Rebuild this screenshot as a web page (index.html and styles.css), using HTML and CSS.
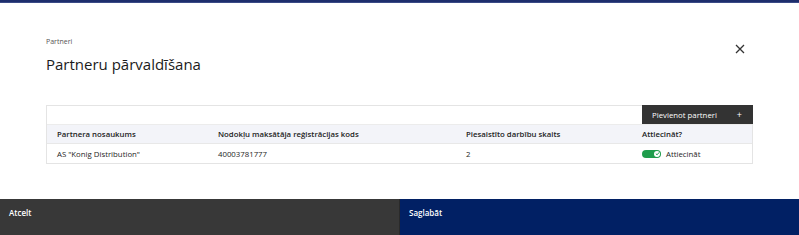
FILE: index.html
```html
<!DOCTYPE html>
<html lang="lv">
<head>
<meta charset="utf-8">
<link rel="stylesheet" href="styles.css">
</head>
<body>
<div class="topbar"></div>
<div class="dialog">
  <div class="head">
    <div class="titles">
      <div class="crumb">Partneri</div>
      <h1 class="title">Partneru pārvaldīšana</h1>
    </div>
    <button class="close" aria-label="Aizvērt">
      <svg width="10" height="10" viewBox="0 0 10 10"><path d="M1 1L9 9M9 1L1 9" stroke="#333" stroke-width="1.3"/></svg>
    </button>
  </div>
  <div class="table">
    <div class="toolbar">
      <button class="add"><span>Pievienot partneri</span><span class="plus">+</span></button>
    </div>
    <div class="row header">
      <div class="c1">Partnera nosaukums</div>
      <div class="c2">Nodokļu maksātāja reģistrācijas kods</div>
      <div class="c3">Piesaistīto darbību skaits</div>
      <div class="c4">Attiecināt?</div>
    </div>
    <div class="row">
      <div class="c1">AS "Konig Distribution"</div>
      <div class="c2">40003781777</div>
      <div class="c3">2</div>
      <div class="c4"><span class="toggle"><span class="knob"><svg width="5" height="5" viewBox="0 0 6 6"><path d="M1 3.2L2.5 4.6L5 1.6" fill="none" stroke="#1f9d4c" stroke-width="1.2"/></svg></span></span>Attiecināt</div>
    </div>
  </div>
</div>
<div class="footer">
  <button class="cancel">Atcelt</button>
  <button class="save">Saglabāt</button>
</div>
</body>
</html>
```
FILE: styles.css
```css
* { box-sizing: border-box; }
html, body { margin: 0; padding: 0; }
body {
  width: 799px;
  height: 235px;
  overflow: hidden;
  background: #fff;
  font-family: "Open Sans", "Noto Sans", sans-serif;
  color: #252525;
  position: relative;
}
.topbar {
  height: 3px;
  background: #1d2e6c;
  border-bottom: 1px solid #3a4a86;
}
.dialog {
  padding: 34px 46px 0 46px;
}
.head {
  display: flex;
  justify-content: space-between;
  align-items: flex-start;
}
.crumb {
  font-size: 7px;
  color: #555;
  line-height: 10px;
}
.title {
  margin: 5px 0 0 0;
  font-weight: 400;
  font-size: 15px;
  line-height: 24px;
  color: #1b1b1b;
}
.close {
  border: 0;
  background: none;
  padding: 0;
  margin: 7px 8px 0 0;
  width: 10px;
  height: 10px;
  display: flex;
}
.table {
  margin-top: 29px;
  border: 1px solid #e4e4e4;
  font-size: 7.8px;
}
.toolbar {
  display: flex;
  justify-content: flex-end;
  height: 19px;
  border-bottom: 1px solid #ececec;
}
.add {
  width: 111px;
  height: 19px;
  margin-top: -1px;
  margin-right: -1px;
  background: #333333;
  color: #fff;
  border: 0;
  display: flex;
  justify-content: space-between;
  align-items: center;
  padding: 0 11px 0 10px;
  font-family: inherit;
  font-size: 7.8px;
}
.plus { font-size: 9px; }
.row {
  display: grid;
  grid-template-columns: 161px 248px 176px 1fr;
  height: 19px;
  align-items: center;
  padding-left: 10px;
}
.row.header {
  background: #f3f4f9;
  border-bottom: 1px solid #e8e8e8;
  font-weight: 600;
  color: #222;
}
.c4 { display: flex; align-items: center; }
.toggle {
  display: inline-flex;
  align-items: center;
  justify-content: flex-end;
  width: 19px;
  height: 8px;
  border-radius: 4px;
  background: #1f9d4c;
  padding-right: 1px;
  margin-right: 5px;
}
.knob {
  width: 6px;
  height: 6px;
  border-radius: 50%;
  background: #fff;
  display: flex;
  align-items: center;
  justify-content: center;
}
.footer {
  position: absolute;
  left: 0;
  right: 0;
  bottom: 0;
  height: 36px;
  display: grid;
  grid-template-columns: 400px 1fr;
}
.footer button {
  border: 0;
  color: #fff;
  font-family: inherit;
  font-size: 8px;
  font-weight: 600;
  text-align: left;
  padding: 8px 9px 0;
  line-height: 12px;
  display: flex;
  align-items: flex-start;
}
.cancel { background: #383838; border-right: 1px solid #2a2a2a !important; }
.save { background: #012064; }
```
